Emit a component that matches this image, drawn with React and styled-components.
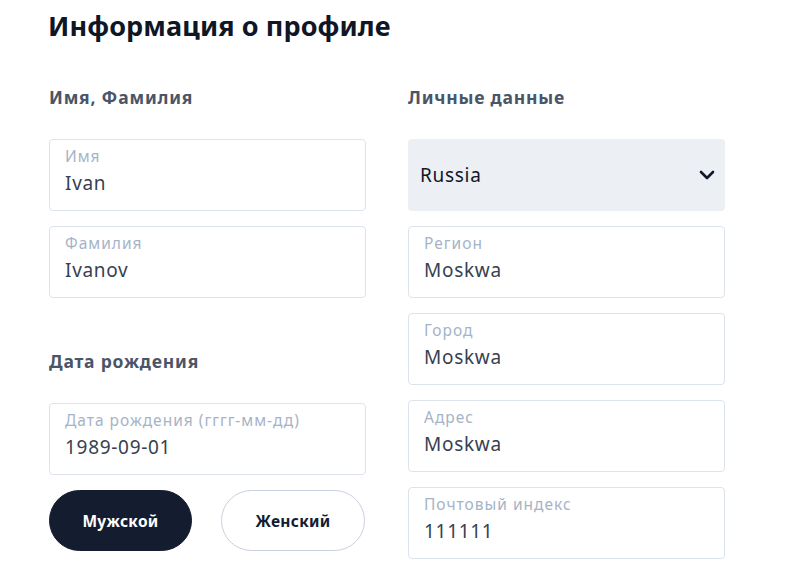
import React from "react";
import styled, { createGlobalStyle } from "styled-components";

const Global = createGlobalStyle`
  html, body { margin: 0; padding: 0; background: #fff; }
  body { font-family: "Noto Sans", "Open Sans", sans-serif; }
  * { box-sizing: border-box; }
`;

const Page = styled.div`
  padding: 8px 0 0 48px;
  width: 800px;
`;

const Title = styled.h1`
  margin: 0;
  font-size: 27px;
  line-height: 36px;
  font-weight: 700;
  color: #0f1626;
  letter-spacing: 0.1px;
`;

const Columns = styled.div`
  display: grid;
  grid-template-columns: 317px 317px;
  column-gap: 42px;
  margin-top: 41px;
  padding-left: 1px;
`;

const Column = styled.div`
  display: flex;
  flex-direction: column;
`;

const SectionTitle = styled.h2`
  margin: ${(p) => (p.$spaced ? "51px" : "0")} 0 30px;
  font-size: 17.5px;
  line-height: 24px;
  font-weight: 700;
  letter-spacing: 0.8px;
  color: #4a5568;
`;

const Fields = styled.div`
  display: flex;
  flex-direction: column;
  gap: 15px;
`;

const Field = styled.div`
  height: 72px;
  border: 1px solid #dde3ec;
  border-radius: 4px;
  padding: 6px 14px 0 15px;
  display: flex;
  flex-direction: column;
`;

const FieldLabel = styled.span`
  font-size: 15.5px;
  line-height: 20px;
  letter-spacing: 1px;
  color: #a6b3c6;
`;

const FieldValue = styled.span`
  margin-top: 5px;
  font-size: 19px;
  line-height: 24px;
  letter-spacing: 0.7px;
  color: #374151;
`;

const Select = styled.div`
  height: 72px;
  background: #eceff3;
  border-radius: 4px;
  padding: 0 10px 0 12px;
  display: flex;
  align-items: center;
  justify-content: space-between;
  font-size: 19px;
  letter-spacing: 0.7px;
  color: #111827;
`;

const Buttons = styled.div`
  display: grid;
  grid-template-columns: 143px 144px;
  column-gap: 29px;
  margin-top: 15px;
`;

const GenderButton = styled.button`
  height: 61px;
  border-radius: 31px;
  font-family: inherit;
  font-size: 15.5px;
  letter-spacing: 0.3px;
  font-weight: 700;
  cursor: pointer;
  background: ${(p) => (p.$active ? "#141d2f" : "#fff")};
  color: ${(p) => (p.$active ? "#fff" : "#141d2f")};
  border: 1px solid ${(p) => (p.$active ? "#141d2f" : "#c9d1dd")};
`;

const Input = ({ label, value }) => (
  <Field>
    <FieldLabel>{label}</FieldLabel>
    <FieldValue>{value}</FieldValue>
  </Field>
);

export default function App() {
  return (
    <>
      <Global />
      <Page>
        <Title>Информация о профиле</Title>
        <Columns>
          <Column>
            <SectionTitle>Имя, Фамилия</SectionTitle>
            <Fields>
              <Input label="Имя" value="Ivan" />
              <Input label="Фамилия" value="Ivanov" />
            </Fields>
            <SectionTitle $spaced>Дата рождения</SectionTitle>
            <Fields>
              <Input label="Дата рождения (гггг-мм-дд)" value="1989-09-01" />
            </Fields>
            <Buttons>
              <GenderButton $active>Мужской</GenderButton>
              <GenderButton>Женский</GenderButton>
            </Buttons>
          </Column>
          <Column>
            <SectionTitle>Личные данные</SectionTitle>
            <Fields>
              <Select>
                <span>Russia</span>
                <svg width="16" height="10" viewBox="0 0 16 10" fill="none">
                  <path d="M2 2l6 6 6-6" stroke="#111827" strokeWidth="2.6" strokeLinecap="round" strokeLinejoin="round" />
                </svg>
              </Select>
              <Input label="Регион" value="Moskwa" />
              <Input label="Город" value="Moskwa" />
              <Input label="Адрес" value="Moskwa" />
              <Input label="Почтовый индекс" value="111111" />
            </Fields>
          </Column>
        </Columns>
      </Page>
    </>
  );
}
